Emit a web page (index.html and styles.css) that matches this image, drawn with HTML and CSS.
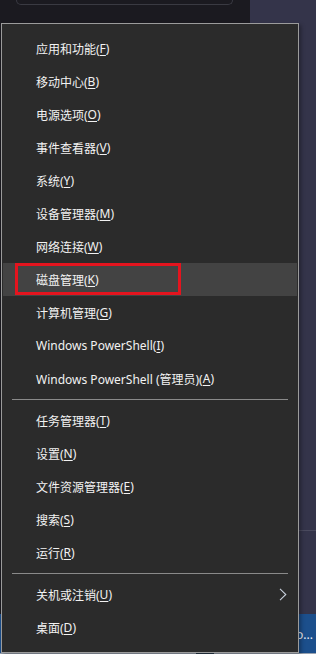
FILE: index.html
```html
<!DOCTYPE html>
<html lang="zh-CN">
<head>
<meta charset="utf-8">
<link rel="stylesheet" href="styles.css">
</head>
<body>
<div class="screen">
  <div class="backdrop">
    <div class="back-top">
      <div class="back-left"><div class="search-box"></div></div>
      <div class="back-right"><div class="back-line"></div></div>
    </div>
    <div class="taskbar"><span class="task-text">Po...</span></div>
    <div class="bottom-strip"><span class="strip-dark"></span></div>
  </div>

  <div class="menu">
    <div class="item">应用和功能(<u>F</u>)</div>
    <div class="item">移动中心(<u>B</u>)</div>
    <div class="item">电源选项(<u>O</u>)</div>
    <div class="item">事件查看器(<u>V</u>)</div>
    <div class="item">系统(<u>Y</u>)</div>
    <div class="item">设备管理器(<u>M</u>)</div>
    <div class="item">网络连接(<u>W</u>)</div>
    <div class="item active">磁盘管理(<u>K</u>)<span class="mark"></span></div>
    <div class="item">计算机管理(<u>G</u>)</div>
    <div class="item">Windows PowerShell(<u>I</u>)</div>
    <div class="item">Windows PowerShell (管理员)(<u>A</u>)</div>
    <div class="sep"></div>
    <div class="item">任务管理器(<u>T</u>)</div>
    <div class="item">设置(<u>N</u>)</div>
    <div class="item">文件资源管理器(<u>E</u>)</div>
    <div class="item">搜索(<u>S</u>)</div>
    <div class="item">运行(<u>R</u>)</div>
    <div class="sep"></div>
    <div class="item has-sub">关机或注销(<u>U</u>)
      <svg class="chev" width="8" height="13" viewBox="0 0 8 13"><path d="M1 0.8 L6.8 6.5 L1 12.2" fill="none" stroke="#c8d0dc" stroke-width="1.1"/></svg>
    </div>
    <div class="item">桌面(<u>D</u>)</div>
  </div>
</div>
</body>
</html>
```

FILE: styles.css
```css
* { box-sizing: border-box; }
html, body { margin: 0; padding: 0; }
body {
  width: 316px;
  height: 654px;
  overflow: hidden;
  background: #1b1a20;
  font-family: "Noto Sans", "Noto Sans CJK SC", sans-serif;
}
.screen {
  position: relative;
  width: 316px;
  height: 654px;
}
.backdrop {
  display: flex;
  flex-direction: column;
  height: 654px;
}
.back-top {
  display: flex;
  height: 614px;
}
.back-left {
  width: 250px;
  background: #1b1a20;
  padding: 0 17px 0 16px;
}
.search-box {
  height: 5px;
  border: 1px solid #3a3a42;
  border-top: none;
  border-radius: 0 0 8px 8px;
}
.back-right {
  flex: 1;
  background: #34344a;
  padding-top: 530px;
}
.back-line {
  height: 1px;
  background: #4a4a5e;
}
.taskbar {
  flex: 1;
  background: #1c4f8c;
  display: flex;
  justify-content: flex-end;
  align-items: center;
  padding-right: 3px;
  padding-top: 2px;
}
.task-text {
  color: #e8eef6;
  font-size: 12px;
  line-height: 14px;
}
.bottom-strip {
  height: 1px;
  background: #9aa3b0;
  padding-left: 196px;
}
.strip-dark {
  display: block;
  width: 18px;
  height: 1px;
  background: #2a3a4a;
}

.menu {
  position: absolute;
  left: 1px;
  top: 23px;
  width: 298px;
  height: 630px;
  background: #2b2b2b;
  border: 1px solid #9b9b9b;
  padding: 8px 0;
  box-shadow: 2px 2px 4px rgba(0,0,0,0.35);
}
.item {
  position: relative;
  height: 33px;
  margin: 0 1px;
  padding-left: 33px;
  display: flex;
  align-items: center;
  color: #f2f2f2;
  font-size: 12px;
  white-space: nowrap;
}
.item u {
  text-decoration: underline;
  text-underline-offset: 2px;
  text-decoration-thickness: 1px;
}
.item.active {
  background: #434343;
}
.mark {
  position: absolute;
  left: 12px;
  top: 0;
  width: 166px;
  height: 32px;
  border: 3px solid #e4141e;
}
.sep {
  height: 1px;
  margin: 4px 10px;
  background: #8a8a8a;
}
.chev {
  position: absolute;
  right: 10px;
  top: 10px;
}
```
